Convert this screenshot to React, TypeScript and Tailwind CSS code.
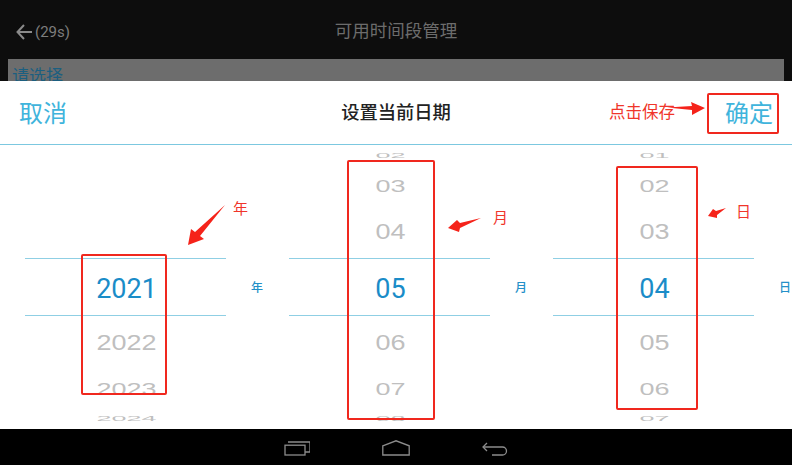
const cjk = "font-['Noto_Sans_CJK_SC','Noto_Sans',sans-serif]"

type WheelRow = { text: string; rowClass: string; scaleClass: string }

const rowStyles = [
  { rowClass: "h-[21px]", scaleClass: "scale-y-[0.28]" },
  { rowClass: "h-[40px]", scaleClass: "scale-y-[0.62]" },
  { rowClass: "h-[52px]", scaleClass: "scale-y-[0.82]" },
  { rowClass: "", scaleClass: "" },
  { rowClass: "h-[54px]", scaleClass: "scale-y-[0.82]" },
  { rowClass: "h-[38px]", scaleClass: "scale-y-[0.62]" },
  { rowClass: "h-[21px]", scaleClass: "scale-y-[0.28]" },
]

const columns = [
  { label: "年", values: ["", "", "", "2021", "2022", "2023", "2024"] },
  { label: "月", values: ["02", "03", "04", "05", "06", "07", "08"] },
  { label: "日", values: ["01", "02", "03", "04", "05", "06", "07"] },
]

const Wheel = ({ label, values }: { label: string; values: string[] }) => {
  const rows: WheelRow[] = values.map((text, i) => ({ text, ...rowStyles[i] }))
  return (
    <div className="flex items-center pl-[25px]">
      <div className="w-[201px] flex flex-col">
        {rows.map((row, i) =>
          i === 3 ? (
            <div
              key={i}
              className="h-[58px] pt-[4px] pl-[2px] border-y border-[#8fcfe4] flex items-center justify-center text-[27px] text-[#1a8cc8] font-['Roboto',sans-serif]"
            >
              {row.text}
            </div>
          ) : (
            <div
              key={i}
              className={`${row.rowClass} pl-[2px] flex items-center justify-center text-[27px] leading-none text-[#bfbfbf] font-['Liberation_Sans',sans-serif]`}
            >
              <span className={`${row.scaleClass} inline-block`}>{row.text}</span>
            </div>
          ),
        )}
      </div>
      <span className={`ml-[25px] text-[12px] font-medium text-[#2490c8] ${cjk}`}>{label}</span>
    </div>
  )
}

const RecentIcon = () => (
  <svg width="26" height="16" viewBox="0 0 26 16" fill="none" stroke="#8c8c8c" strokeWidth="1.3">
    <rect x="1" y="5.2" width="20" height="9.8" />
    <path d="M4 2h22v10h-5" />
  </svg>
)

const HomeIcon = () => (
  <svg width="28" height="16" viewBox="0 0 28 16" fill="none" stroke="#8c8c8c" strokeWidth="1.3">
    <path d="M0.8 5.8 14 0.8l13.2 5v9.2H0.8z" />
  </svg>
)

const BackIcon = () => (
  <svg width="26" height="16" viewBox="0 0 26 16" fill="none" stroke="#8c8c8c" strokeWidth="1.3">
    <path d="M5 3 1 7l4 4" />
    <path d="M1 7h19.5a4 4 0 0 1 0 8H10" />
  </svg>
)

export default function App() {
  return (
    <div className={`relative w-[792px] h-[465px] overflow-hidden bg-black flex flex-col ${cjk}`}>
      <div className="h-[59px] bg-[#0d0d0d] relative flex items-center justify-center">
        <div className="absolute left-[16px] top-[21px] flex items-center gap-[3px] text-[#7d7d7d]">
          <svg width="16" height="18" viewBox="0 0 16 18" fill="none" stroke="#8a8a8a" strokeWidth="2">
            <path d="M8 2 1.5 9 8 16M2 9h14" />
          </svg>
          <span className="text-[15px] font-['Roboto',sans-serif]">(29s)</span>
        </div>
        <span className="text-[17.5px] text-[#6c6c6c] mt-[2px]">可用时间段管理</span>
      </div>

      <div className="h-[22px] bg-[#0d0d0d] px-[8px]">
        <div className="h-full bg-[#6d6d6d] overflow-hidden pl-[4px] text-[17px] leading-[31px] text-[#1c5f80]">请选择</div>
      </div>

      <div className="bg-white h-[348px] flex flex-col">
        <div className="h-[64px] border-b border-[#7cc8e0] flex items-center px-[19px] pb-[2px]">
          <span className="w-[100px] text-[24px] text-[#3fb4dc]">取消</span>
          <span className="flex-1 text-center text-[18.3px] font-medium text-[#222222] pt-[1px]">设置当前日期</span>
          <span className="w-[100px] text-right text-[24px] text-[#3fb4dc]">确定</span>
        </div>
        <div className="grid grid-cols-3">
          {columns.map((c) => (
            <Wheel key={c.label} label={c.label} values={c.values} />
          ))}
        </div>
      </div>

      <div className="flex-1 flex items-center justify-center gap-[72px] bg-black pt-[2px]">
        <RecentIcon />
        <HomeIcon />
        <BackIcon />
      </div>

      {/* red annotations drawn over the screenshot */}
      <div className="absolute left-[81px] top-[254px] w-[86px] h-[141px] border-2 border-[#f0281e] rounded-[2px]" />
      <div className="absolute left-[347px] top-[160px] w-[88px] h-[260px] border-2 border-[#f0281e] rounded-[2px]" />
      <div className="absolute left-[616px] top-[166px] w-[82px] h-[244px] border-2 border-[#f0281e] rounded-[2px]" />
      <div className="absolute left-[707px] top-[93px] w-[72px] h-[41px] border-2 border-[#f0281e] rounded-[2px]" />

      <span className="absolute left-[609px] top-[99px] text-[16.5px] leading-[24px] text-[#f0352a]">点击保存</span>
      <span className="absolute left-[233px] top-[198px] text-[15px] leading-[20px] text-[#f0352a]">年</span>
      <span className="absolute left-[493px] top-[207px] text-[15px] leading-[20px] text-[#f0352a]">月</span>
      <span className="absolute left-[736px] top-[201px] text-[15px] leading-[20px] text-[#f0352a]">日</span>

      <svg className="absolute left-0 top-0 pointer-events-none" width="792" height="465" viewBox="0 0 792 465" fill="#f5231a">
        <polygon points="667,107.5 692,106 691,102 705,108 692,115 692,110" />
        <polygon points="225,205 200,236 204,239 188,245 191,229 195,232" />
        <polygon points="481,218 460,223 457,220 448,228 459,232 460,228" />
        <polygon points="726,208 716,211 713,209 708,216 717,218 717,215" />
      </svg>
    </div>
  )
}
